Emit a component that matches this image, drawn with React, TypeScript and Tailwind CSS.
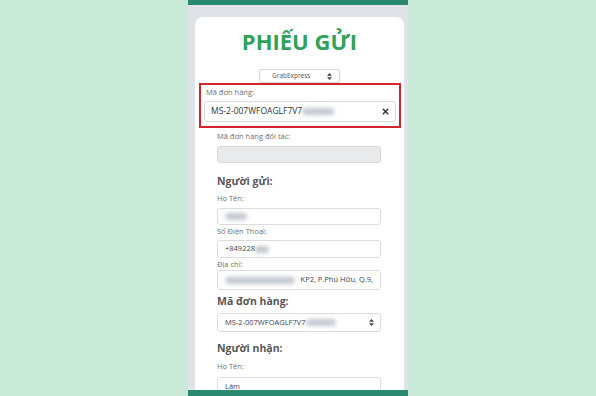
import { X } from 'lucide-react';

const font = { fontFamily: '"Open Sans", "Liberation Sans", sans-serif' };

const Blur = ({ w }: { w: number }) => (
  <span
    className="inline-block h-[7px] rounded-sm bg-gray-400/60 blur-[2px] align-middle"
    style={{ width: w }}
  />
);

const Arrows = () => (
  <svg width="5" height="7" viewBox="0 0 5 7" className="shrink-0">
    <path d="M2.5 0 L5 2.7 H0 Z M2.5 7 L5 4.3 H0 Z" fill="#444" />
  </svg>
);

const Label = ({ children, className = '' }: { children: React.ReactNode; className?: string }) => (
  <div className={`text-[7.5px] leading-[9px] text-[#707070] ${className}`}>{children}</div>
);

const Heading = ({ children, className = '' }: { children: React.ReactNode; className?: string }) => (
  <div className={`text-[10.5px] leading-[12px] font-bold text-[#555] ${className}`}>{children}</div>
);

const Input = ({ children, className = '' }: { children?: React.ReactNode; className?: string }) => (
  <div
    className={`flex items-center px-[7px] bg-white border border-[#dcdcdc] rounded-[3px] text-[7.5px] text-[#444] ${className}`}
  >
    {children}
  </div>
);

export default function App() {
  return (
    <div className="w-[596px] h-[396px] bg-[#c9ead8] flex justify-center overflow-hidden" style={font}>
      <div className="w-[220px] h-full flex flex-col bg-[#dfe3e8]">
        <div className="h-[5px] bg-[#2a8a70] shrink-0" />
        <div className="flex-1 overflow-hidden pl-[7px] pr-[4px] pt-[12px]">
          <div className="bg-white rounded-t-[8px] h-full flex flex-col">
            <h1 className="text-center text-[22px] leading-[22px] font-bold text-[#2fa15a] mt-[13px]">
              PHIẾU GỬI
            </h1>
            <div className="flex justify-center mt-[17px]">
              <div className="w-[81px] h-[14px] border border-[#d6d6d6] rounded-[2px] flex items-center justify-between pl-[12px] pr-[7px] text-[6.5px] text-[#555]">
                <span>GrabExpress</span>
                <Arrows />
              </div>
            </div>
            <div className="ml-[4px] mr-[3px] h-[45px] shrink-0 border-2 border-[#d0262c] px-[3px] pt-[3px]">
              <Label className="pl-[2px]">Mã đơn hàng:</Label>
              <div className="mt-[4px] h-[21px] bg-white border border-[#dcdcdc] rounded-[3px] flex items-center pl-[6px] pr-[5px] text-[8.5px] text-[#333]">
                <span>MS-2-007WFOAGLF7V7</span>
                <Blur w={32} />
                <X className="ml-auto w-[9px] h-[9px] text-[#333]" strokeWidth={4} />
              </div>
            </div>
            <div className="ml-[22px] mr-[23px]">
              <Label className="mt-[4px]">Mã đơn hàng đối tác:</Label>
              <div className="mt-[5px] h-[17px] bg-[#e9eaeb] border border-[#d9d9d9] rounded-[3px]" />
              <Heading className="mt-[12px]">Người gửi:</Heading>
              <Label className="mt-[7px]">Họ Tên:</Label>
              <Input className="mt-[5px] h-[17px]">
                <Blur w={22} />
              </Input>
              <Label className="mt-[2px]">Số Điện Thoại:</Label>
              <Input className="mt-[4px] h-[18px]">
                <span>+849228</span>
                <Blur w={14} />
              </Input>
              <Label className="mt-[2px]">Địa chỉ:</Label>
              <Input className="mt-[1px] h-[20px]">
                <Blur w={76} />
                <span className="ml-[6px] whitespace-nowrap">KP2, P.Phú Hữu, Q.9,</span>
              </Input>
              <Heading className="mt-[5px]">Mã đơn hàng:</Heading>
              <Input className="mt-[6px] h-[19px] justify-between pr-[6px]">
                <span className="flex items-center">
                  <span>MS-2-007WFOAGLF7V7</span>
                  <Blur w={30} />
                </span>
                <Arrows />
              </Input>
              <Heading className="mt-[10px]">Người nhận:</Heading>
              <Label className="mt-[8px]">Họ Tên:</Label>
              <Input className="mt-[6px] h-[18px] items-start pt-[3px]">
                <span>Lâm</span>
              </Input>
            </div>
          </div>
        </div>
        <div className="h-[6px] bg-[#2a8a70] shrink-0" />
      </div>
    </div>
  );
}
